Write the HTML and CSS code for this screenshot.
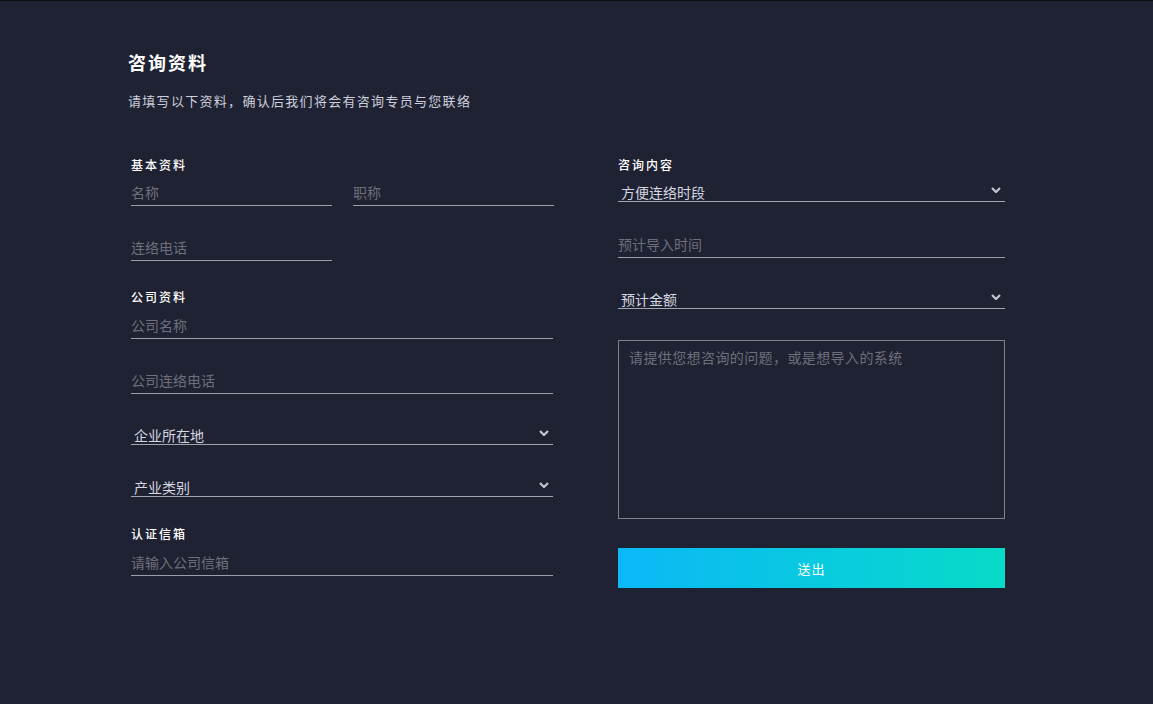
FILE: index.html
```html
<!DOCTYPE html>
<html lang="zh-CN">
<head>
    <meta charset="UTF-8">
    <meta name="viewport" content="width=device-width, initial-scale=1.0">
    <title>咨询资料</title>
    <link rel="stylesheet" href="styles.css">
</head>
<body>
    <div class="page">
        <h1 class="page-title">咨询资料</h1>
        <p class="page-desc">请填写以下资料，确认后我们将会有咨询专员与您联络</p>

        <form class="contact-form">
            <div class="form-col left-col">
                <div class="section-label">基本资料</div>
                <div class="field-row">
                    <input type="text" class="field" placeholder="名称">
                    <input type="text" class="field" placeholder="职称">
                </div>
                <div class="field-row gap">
                    <input type="text" class="field" placeholder="连络电话">
                    <div></div>
                </div>

                <div class="section-label spaced">公司资料</div>
                <input type="text" class="field" placeholder="公司名称">
                <input type="text" class="field gap" placeholder="公司连络电话">

                <div class="select-wrap gap">
                    <select class="select">
                        <option>企业所在地</option>
                    </select>
                    <svg class="chevron" viewBox="0 0 10 6"><polyline points="1,1 5,5 9,1"/></svg>
                </div>
                <div class="select-wrap gap">
                    <select class="select">
                        <option>产业类别</option>
                    </select>
                    <svg class="chevron" viewBox="0 0 10 6"><polyline points="1,1 5,5 9,1"/></svg>
                </div>

                <div class="section-label spaced">认证信箱</div>
                <input type="email" class="field" placeholder="请输入公司信箱">
            </div>

            <div class="form-col right-col">
                <div class="section-label">咨询内容</div>
                <div class="select-wrap">
                    <select class="select">
                        <option>方便连络时段</option>
                    </select>
                    <svg class="chevron" viewBox="0 0 10 6"><polyline points="1,1 5,5 9,1"/></svg>
                </div>
                <input type="text" class="field gap" placeholder="预计导入时间">
                <div class="select-wrap gap">
                    <select class="select">
                        <option>预计金额</option>
                    </select>
                    <svg class="chevron" viewBox="0 0 10 6"><polyline points="1,1 5,5 9,1"/></svg>
                </div>
                <textarea class="message" placeholder="请提供您想咨询的问题，或是想导入的系统"></textarea>
                <button type="button" class="submit-btn">送出</button>
            </div>
        </form>
    </div>
</body>
</html>
```

FILE: styles.css
```css
body {
    margin: 0;
    padding: 0;
    background: #1f2232;
    border-top: 1px solid #0c0d12;
    font-family: "Noto Sans CJK SC", "Noto Sans", sans-serif;
    color: #fff;
    min-height: 703px;
}

.page {
    padding: 49px 0 0 128px;
}

.page-title {
    margin: 0;
    font-size: 18px;
    line-height: 24px;
    font-weight: 700;
    letter-spacing: 2px;
    color: #fff;
}

.page-desc {
    margin: 17px 0 0;
    font-size: 13px;
    line-height: 20px;
    letter-spacing: 1.3px;
    color: #cbd0dc;
}

/* two column form */
.contact-form {
    display: grid;
    grid-template-columns: 422px 387px;
    column-gap: 65px;
    margin: 45px 0 0 3px;
}

.form-col {
    display: flex;
    flex-direction: column;
}

.section-label {
    font-size: 12px;
    line-height: 18px;
    font-weight: 500;
    letter-spacing: 2px;
    color: #fff;
    margin-bottom: 4px;
}

.section-label.spaced {
    margin-top: 27px;
    margin-bottom: 5px;
}

.field-row {
    display: grid;
    grid-template-columns: 201px 201px;
    column-gap: 21px;
}

.gap {
    margin-top: 27px;
}

.field {
    box-sizing: border-box;
    width: 100%;
    height: 28px;
    padding: 0;
    border: none;
    border-bottom: 1px solid #9b9ea9;
    background: transparent;
    font-family: inherit;
    font-size: 14px;
    color: #d5d8e0;
    outline: none;
}

.field::placeholder {
    color: #6c707c;
}

.select-wrap {
    position: relative;
}

.select {
    -webkit-appearance: none;
    appearance: none;
    box-sizing: border-box;
    width: 100%;
    height: 24px;
    padding: 5px 0 0 3px;
    border: none;
    border-radius: 0;
    border-bottom: 1px solid #a3a6b0;
    background: transparent;
    font-family: inherit;
    font-size: 14px;
    line-height: 18px;
    color: #d5d8e0;
    outline: none;
}

.select option {
    background: #1f2232;
}

.chevron {
    position: absolute;
    right: 4px;
    top: 9px;
    width: 10px;
    height: 6px;
    fill: none;
    stroke: #c3c6cf;
    stroke-width: 2.2;
    pointer-events: none;
}

.message {
    box-sizing: border-box;
    height: 179px;
    margin-top: 30px;
    padding: 7px 10px;
    border: 1px solid #7f828d;
    background: transparent;
    font-family: inherit;
    font-size: 14px;
    line-height: 18px;
    letter-spacing: 0.4px;
    color: #d5d8e0;
    resize: none;
    outline: none;
}

.message::placeholder {
    color: #6c707c;
}

.submit-btn {
    height: 40px;
    margin-top: 29px;
    border: none;
    background: linear-gradient(to right, #0bb8f8, #07dbc8);
    font-family: inherit;
    font-size: 13px;
    letter-spacing: 1px;
    color: #fff;
    cursor: pointer;
}
```
